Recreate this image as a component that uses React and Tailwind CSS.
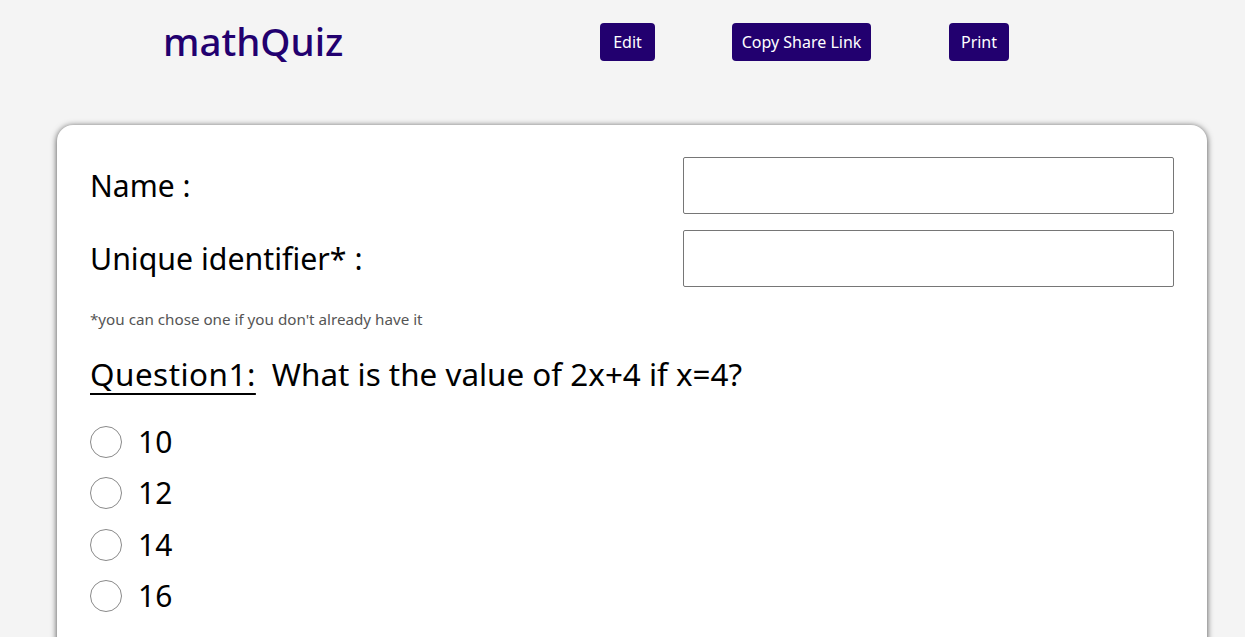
import React from "react";

const font = { fontFamily: '"Noto Sans", "Open Sans", sans-serif' };

function Btn({ children, w }) {
  return (
    <button className={`h-[38px] rounded-[4px] bg-[#22006f] text-white text-[16px] leading-none ${w}`}>
      {children}
    </button>
  );
}

function Option({ label }) {
  return (
    <label className="flex items-center h-[51.5px]">
      <span className="w-[32px] h-[32px] rounded-full border border-[#8a8a8a] bg-white shrink-0" />
      <span className="ml-[16px] text-[30px] text-black leading-none">{label}</span>
    </label>
  );
}

export default function App() {
  return (
    <div className="min-h-[637px] bg-[#f4f4f4] overflow-hidden" style={font}>
      <header className="flex items-center h-[84px]">
        <div className="ml-[163px] w-[437px] text-[#22006f] text-[38.5px] font-medium leading-none -mt-[2px]">
          mathQuiz
        </div>
        <div className="flex items-center">
          <Btn w="w-[55px]">Edit</Btn>
          <div className="w-[77px]" />
          <Btn w="w-[139px]">Copy Share Link</Btn>
          <div className="w-[78px]" />
          <Btn w="w-[60px]">Print</Btn>
        </div>
      </header>
      <main className="mt-[41px] ml-[57px] w-[1150px] bg-white rounded-[16px] shadow-[0_1px_6px_rgba(0,0,0,0.7)] px-[33px] pt-[32px] pb-[40px]">
        <div className="flex items-center justify-between">
          <div className="text-[30px] text-black">Name :</div>
          <input className="w-[491px] h-[57px] border border-[#767676] rounded-[2px] bg-white" />
        </div>
        <div className="flex items-center justify-between mt-[16px]">
          <div className="text-[30.3px] text-black">Unique identifier* :</div>
          <input className="w-[491px] h-[57px] border border-[#767676] rounded-[2px] bg-white" />
        </div>
        <div className="mt-[22px] text-[15.2px] text-[#555] leading-[20px]">
          *you can chose one if you don't already have it
        </div>
        <div className="mt-[25px] text-[31.4px] text-black leading-[40px] flex">
          <span className="underline underline-offset-[7px] decoration-[2px] tracking-[0.5px]">Question1:</span>
          <span className="ml-[16px]">What is the value of 2x+4 if x=4?</span>
        </div>
        <div className="mt-[22px] flex flex-col">
          <Option label="10" />
          <Option label="12" />
          <Option label="14" />
          <Option label="16" />
        </div>
      </main>
    </div>
  );
}
